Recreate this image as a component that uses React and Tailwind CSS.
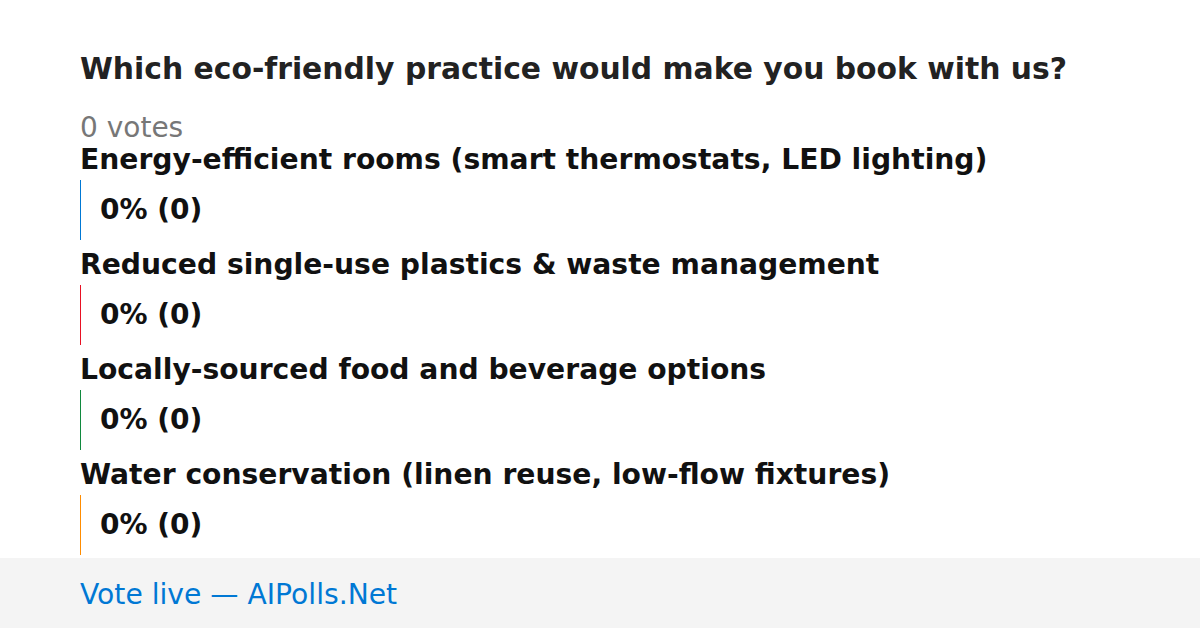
import React from 'react';

const options = [
  { label: 'Energy-efficient rooms (smart thermostats, LED lighting)', color: 'bg-[#0078d4]' },
  { label: 'Reduced single-use plastics & waste management', color: 'bg-[#e81123]' },
  { label: 'Locally-sourced food and beverage options', color: 'bg-[#10893e]' },
  { label: 'Water conservation (linen reuse, low-flow fixtures)', color: 'bg-[#ff8c00]' },
];

const App = () => {
  return (
    <div className="w-[1200px] h-[628px] bg-white flex flex-col font-['DejaVu_Sans',sans-serif] overflow-hidden">
      {/* Poll body */}
      <div className="flex-1 px-20 pt-[51px]">
        <h1 className="text-[29.8px] leading-[36px] font-bold text-[#222]">
          Which eco-friendly practice would make you book with us?
        </h1>
        <p className="mt-[26px] text-[28px] leading-[30px] text-[#777]">0 votes</p>
        <div className="flex flex-col gap-[8px]">
          {options.map((opt, i) => (
            <div key={i}>
              <div className="text-[28.2px] leading-[34px] font-bold text-[#111]">{opt.label}</div>
              <div className="mt-[3px] flex items-center h-[60px]">
                <div className={`w-px h-full ${opt.color}`} />
                <span className="ml-[19px] text-[28px] font-bold text-[#111]">0% (0)</span>
              </div>
            </div>
          ))}
        </div>
      </div>

      {/* Footer */}
      <div className="h-[70px] shrink-0 bg-[#f4f4f4] px-20 pt-[5px] flex items-center">
        <span className="text-[28.2px] text-[#0078d4]">Vote live — AIPolls.Net</span>
      </div>
    </div>
  );
};

export default App;
